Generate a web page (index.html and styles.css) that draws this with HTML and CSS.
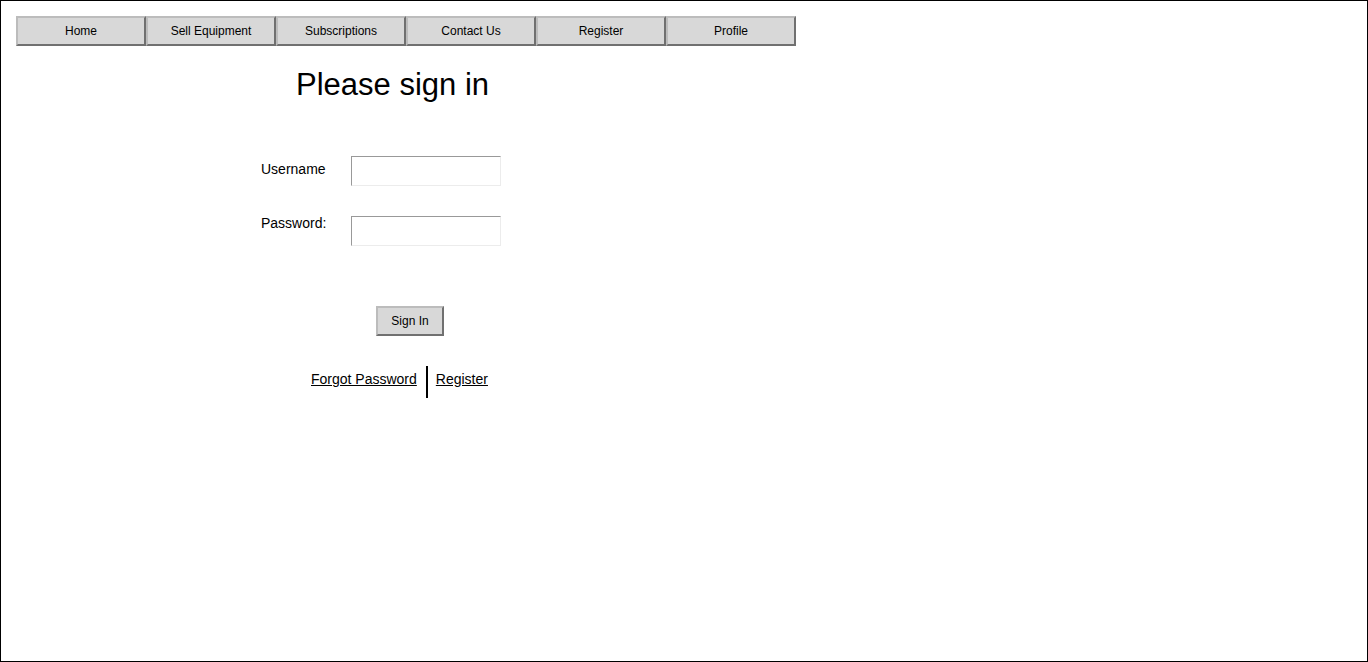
FILE: index.html
```html
<!DOCTYPE html>
<html>
<head>
<meta charset="utf-8">
<title>Please sign in</title>
<link rel="stylesheet" href="styles.css">
</head>
<body>
<div class="page">
  <nav class="nav">
    <button class="nav-btn">Home</button>
    <button class="nav-btn">Sell Equipment</button>
    <button class="nav-btn">Subscriptions</button>
    <button class="nav-btn">Contact Us</button>
    <button class="nav-btn">Register</button>
    <button class="nav-btn">Profile</button>
  </nav>
  <h1 class="title">Please sign in</h1>
  <form class="form">
    <div class="row">
      <label class="label label-first">Username</label>
      <input class="field" type="text">
    </div>
    <div class="row row-second">
      <label class="label label-second">Password:</label>
      <input class="field" type="password">
    </div>
    <div class="submit-row">
      <button type="button" class="signin-btn">Sign In</button>
    </div>
    <div class="links">
      <a class="link" href="#">Forgot Password</a>
      <span class="sep"></span>
      <a class="link" href="#">Register</a>
    </div>
  </form>
</div>
</body>
</html>
```
FILE: styles.css
```css
html, body {
  margin: 0;
  padding: 0;
  background: #fff;
}
body {
  font-family: "Liberation Sans", Arial, sans-serif;
  color: #000;
}
.page {
  box-sizing: border-box;
  width: 1368px;
  height: 662px;
  border: 1px solid #000;
  padding: 15px;
}
.nav {
  display: flex;
  height: 30px;
}
.nav-btn, .signin-btn {
  box-sizing: border-box;
  height: 30px;
  margin: 0;
  padding: 0;
  background: #d8d8d8;
  border: 2px solid;
  border-color: #bcbcbc #707070 #707070 #bcbcbc;
  font-family: "Liberation Sans", Arial, sans-serif;
  font-size: 12px;
  color: #000;
}
.nav-btn {
  width: 130px;
}
.title {
  margin: 21px 0 0 0;
  padding-left: 280px;
  font-size: 31px;
  line-height: 36px;
  font-weight: normal;
}
.form {
  margin: 53px 0 0 0;
  padding-left: 245px;
}
.row {
  display: flex;
  align-items: flex-start;
  height: 30px;
}
.row-second {
  margin-top: 30px;
}
.label {
  width: 90px;
  font-size: 14px;
  line-height: 16px;
}
.label-first {
  margin-top: 5px;
}
.label-second {
  margin-top: -1px;
}
.field {
  box-sizing: border-box;
  width: 150px;
  height: 30px;
  margin: 0;
  padding: 0 4px;
  background: #fff;
  border: 1px solid;
  border-color: #999 #ececec #ececec #999;
}
.submit-row {
  margin-top: 60px;
  padding-left: 115px;
}
.signin-btn {
  width: 68px;
}
.links {
  display: flex;
  align-items: flex-start;
  margin-top: 30px;
  margin-left: 50px;
  height: 32px;
}
.link {
  margin-top: 5px;
  font-size: 14px;
  line-height: 16px;
  color: #000;
  text-decoration: underline;
}
.sep {
  width: 2px;
  height: 32px;
  background: #000;
  margin: 0 8px 0 9px;
}
```
